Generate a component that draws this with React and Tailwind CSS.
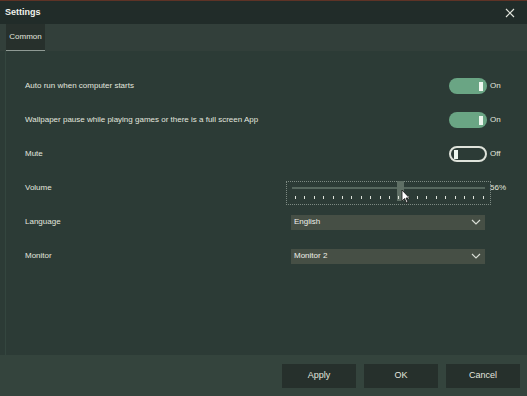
import { useState } from 'react';

function Toggle({ on }) {
  return on ? (
    <div className="w-[38px] h-[16px] rounded-full bg-[#6aa584] flex items-center justify-end pr-[4px]">
      <div className="w-[4px] h-[9px] bg-[#eef7ef]" />
    </div>
  ) : (
    <div className="w-[38px] h-[16px] rounded-full border-2 border-[#dfe3db] flex items-center pl-[3px]">
      <div className="w-[4px] h-[9px] bg-[#eef7ef]" />
    </div>
  );
}

function Chevron() {
  return (
    <svg width="10" height="6" viewBox="0 0 10 6" className="mr-[4px]">
      <path d="M1 1 L5 5 L9 1" stroke="#d8ddd5" strokeWidth="1.2" fill="none" />
    </svg>
  );
}

function Select({ value }) {
  return (
    <div className="ml-[5px] w-[194px] h-[15px] bg-[#464f45] flex items-center justify-between pl-[3px] text-[#eef0ea]">
      <span>{value}</span>
      <Chevron />
    </div>
  );
}

export default function App() {
  const [settings] = useState({ autorun: true, pause: true, mute: false, volume: 56 });
  const ticks = Array.from({ length: 21 }, (_, i) => i);

  return (
    <div
      className="w-[527px] h-[396px] flex flex-col bg-[#2c3b36] text-[#e2e6df] text-[8px] overflow-hidden"
      style={{ fontFamily: '"Liberation Sans", Arial, sans-serif' }}
    >
      <div className="h-px bg-[#5e3326]" />

      {/* title bar */}
      <div className="h-[23px] bg-[#212c29] flex items-center justify-between px-[5px]">
        <span className="font-bold text-[9px] text-[#f0f2ec]">Settings</span>
        <svg width="10" height="10" viewBox="0 0 10 10" className="mr-[7px]">
          <path d="M1 1 L9 9 M9 1 L1 9" stroke="#e0e4dc" strokeWidth="1.2" />
        </svg>
      </div>

      {/* tabs */}
      <div className="h-[27px] bg-[#323f3a] pl-[6px] flex">
        <div className="w-[39px] h-full bg-[#27302c] border-b border-[#8f9a94] flex items-center justify-center">
          Common
        </div>
      </div>

      {/* content */}
      <div className="flex-1 border-l border-[#34463f] ml-[5px] pt-[18px]">
        <div className="flex items-center h-[34px]">
          <div className="w-[279px] pl-[19px]">Auto run when computer starts</div>
          <div className="w-[202px] flex justify-end"><Toggle on={settings.autorun} /></div>
          <span className="ml-[3px]">On</span>
        </div>
        <div className="flex items-center h-[34px]">
          <div className="w-[279px] pl-[19px]">Wallpaper pause while playing games or there is a full screen App</div>
          <div className="w-[202px] flex justify-end"><Toggle on={settings.pause} /></div>
          <span className="ml-[3px]">On</span>
        </div>
        <div className="flex items-center h-[34px]">
          <div className="w-[279px] pl-[19px]">Mute</div>
          <div className="w-[202px] flex justify-end"><Toggle on={settings.mute} /></div>
          <span className="ml-[3px]">Off</span>
        </div>
        <div className="flex items-start h-[34px]">
          <div className="w-[280px] pl-[19px] self-center">Volume</div>
          <div className="relative mt-[10px] w-[205px] h-[24px] border border-dotted border-[#7d8a83]">
            <div className="absolute left-[5px] right-[5px] top-[5px] h-[2px] bg-[#56675e]" />
            <div
              className="absolute top-[-1px] w-[7px] h-[20px] bg-[#5f6f65]"
              style={{ left: `${5 + (settings.volume / 100) * 188}px` }}
            />
            <div className="absolute left-[8px] right-[6px] top-[14px] flex justify-between">
              {ticks.map(t => (
                <div key={t} className="w-px h-[3px] bg-[#dfe4dc]" />
              ))}
            </div>
            <svg width="10" height="15" viewBox="0 0 10 15" className="absolute left-[114px] top-[7px]">
              <path d="M1 1 L1 12 L3.5 9.5 L5.5 14 L7 13.3 L5 9 L8.5 9 Z" fill="#fff" stroke="#111" strokeWidth="0.8" />
            </svg>
          </div>
          <span className="mt-[11px] -ml-[1px]">{settings.volume}%</span>
        </div>
        <div className="flex items-center h-[34px]">
          <div className="w-[280px] pl-[19px]">Language</div>
          <Select value="English" />
        </div>
        <div className="flex items-center h-[34px]">
          <div className="w-[280px] pl-[19px]">Monitor</div>
          <Select value="Monitor 2" />
        </div>
      </div>

      {/* footer */}
      <div className="h-[41px] bg-[#34443d] flex items-start justify-end gap-[8px] pt-[9px] pr-[7px] text-[9px]">
        {['Apply', 'OK', 'Cancel'].map(b => (
          <button key={b} className="w-[74px] h-[24px] bg-[#26302c] text-[#e2e6df]">
            {b}
          </button>
        ))}
      </div>
    </div>
  );
}
